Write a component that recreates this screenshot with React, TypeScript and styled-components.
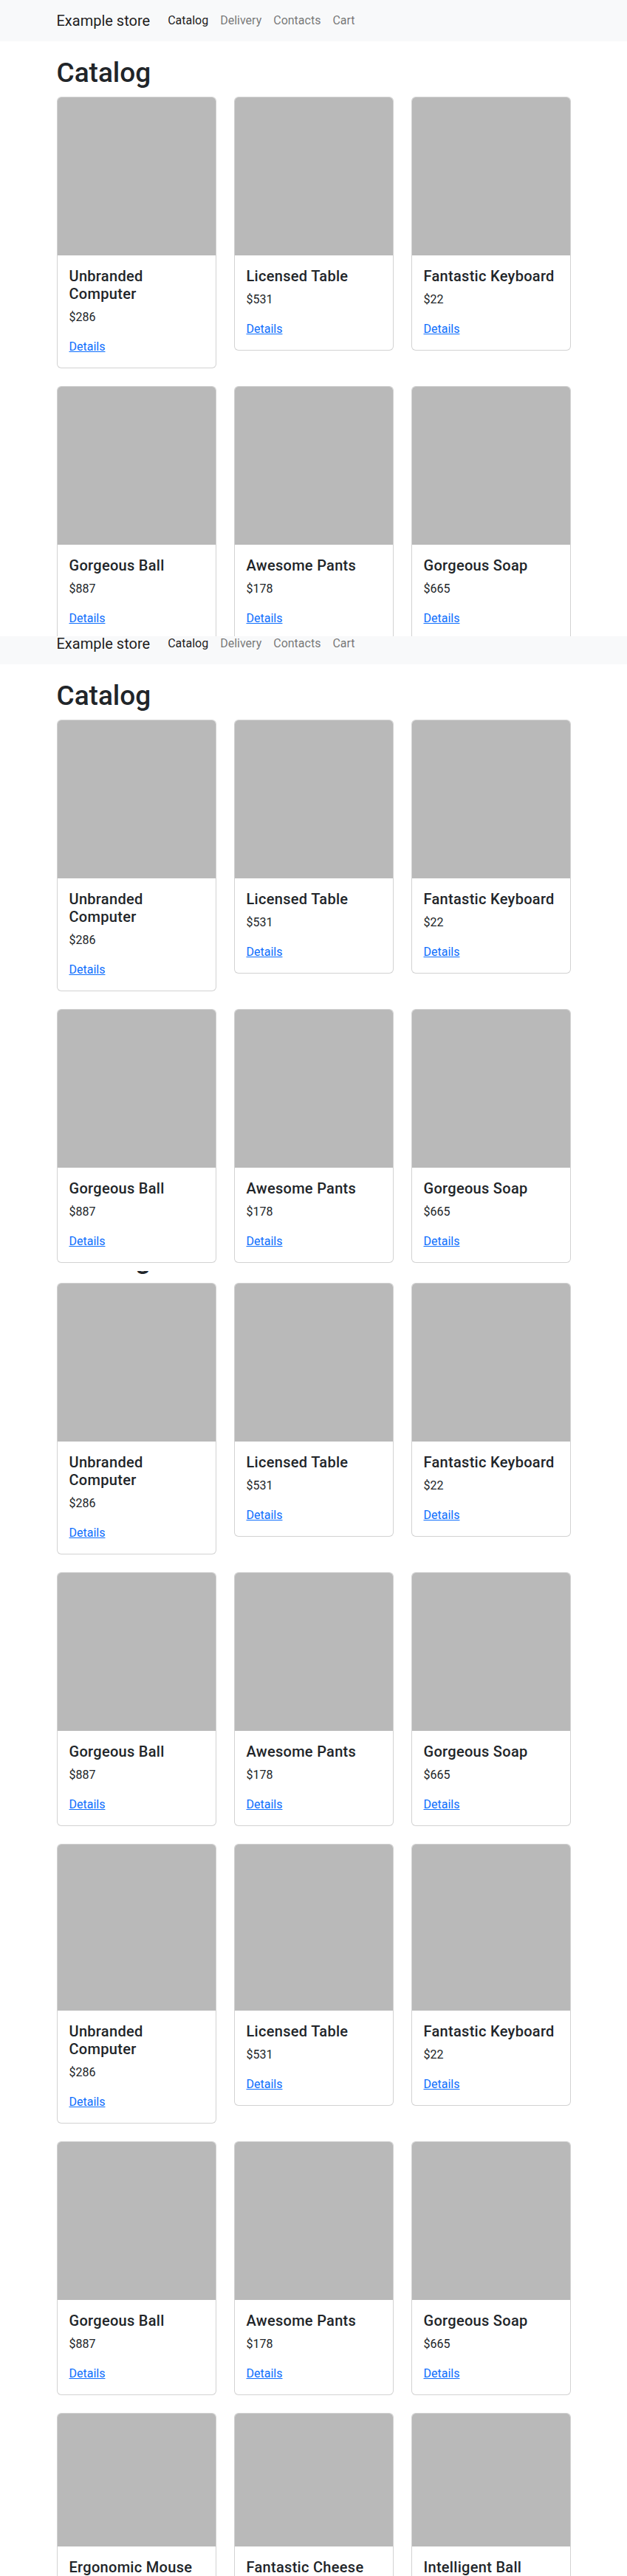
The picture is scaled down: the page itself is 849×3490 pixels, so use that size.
import React from "react";
import styled, { createGlobalStyle } from "styled-components";

const GlobalStyle = createGlobalStyle`
  *, *::before, *::after { box-sizing: border-box; }
  html, body { margin: 0; padding: 0; background: #ffffff; }
  body {
    font-family: Roboto, "Liberation Sans", Arial, sans-serif;
    font-size: 16px;
    line-height: 1.5;
    color: #212529;
    -webkit-font-smoothing: antialiased;
  }
`;

type Product = { name: string; price?: number; img: number };

const baseProducts: { name: string; price?: number }[] = [
  { name: "Unbranded Computer", price: 286 },
  { name: "Licensed Table", price: 531 },
  { name: "Fantastic Keyboard", price: 22 },
  { name: "Gorgeous Ball", price: 887 },
  { name: "Awesome Pants", price: 178 },
  { name: "Gorgeous Soap", price: 665 },
];

const pageProducts: Product[] = baseProducts.map((p) => ({ ...p, img: 214 }));

const longListProducts: Product[] = [
  ...baseProducts.slice(0, 3).map((p) => ({ ...p, img: 225 })),
  ...baseProducts.slice(3, 6).map((p) => ({ ...p, img: 214 })),
  { name: "Ergonomic Mouse", img: 180 },
  { name: "Fantastic Cheese", img: 180 },
  { name: "Intelligent Ball", img: 180 },
];

/* One captured screen slice of the stitched screenshot */
const Shot = styled.section<{ $h: number }>`
  height: ${(p) => p.$h}px;
  overflow: hidden;
`;

/* Content of a slice, scrolled up by $shift pixels */
const Scrolled = styled.div<{ $shift: number }>`
  margin-top: ${(p) => -p.$shift}px;
`;

const NavBar = styled.nav`
  background: #f8f9fa;
  padding: 8px 0;
`;

const NavInner = styled.div`
  width: 720px;
  margin: 0 auto;
  padding: 0 12px;
  display: flex;
  align-items: center;
`;

const Brand = styled.a`
  display: block;
  padding: 5px 0;
  margin-right: 16px;
  font-size: 20px;
  line-height: 30px;
  color: rgba(0, 0, 0, 0.9);
  text-decoration: none;
  white-space: nowrap;
`;

const NavList = styled.ul`
  display: flex;
  list-style: none;
  margin: 0;
  padding: 0;
`;

const NavLink = styled.a<{ $active?: boolean }>`
  display: block;
  padding: 8px;
  font-size: 16px;
  line-height: 24px;
  text-decoration: none;
  color: ${(p) => (p.$active ? "rgba(0, 0, 0, 0.9)" : "rgba(0, 0, 0, 0.55)")};
`;

const Container = styled.main<{ $top: number }>`
  width: 720px;
  margin: 0 auto;
  padding: ${(p) => p.$top}px 12px 0;
`;

const Heading = styled.h1`
  margin: 0 0 8px;
  font-size: 37px;
  line-height: 48px;
  font-weight: 500;
  color: #212529;
`;

const Grid = styled.div`
  display: grid;
  grid-template-columns: repeat(3, 216px);
  column-gap: 24px;
  row-gap: 24px;
  align-items: start;
`;

const Card = styled.article`
  display: flex;
  flex-direction: column;
  background: #ffffff;
  border: 1px solid rgba(0, 0, 0, 0.175);
  border-radius: 6px;
  overflow: hidden;
`;

const CardImage = styled.div<{ $h: number }>`
  height: ${(p) => p.$h}px;
  background: #b9b9b9;
`;

const CardBody = styled.div`
  padding: 16px;
`;

const CardTitle = styled.h5`
  margin: 0 0 8px;
  font-size: 20px;
  line-height: 24px;
  font-weight: 500;
  letter-spacing: 0.3px;
  color: #212529;
`;

const Price = styled.p`
  margin: 0 0 16px;
  font-size: 16px;
  line-height: 24px;
`;

const DetailsLink = styled.a`
  font-size: 16px;
  line-height: 24px;
  color: #0d6efd;
  text-decoration: underline;
`;

const Navigation = () => (
  <NavBar>
    <NavInner>
      <Brand href="#">Example store</Brand>
      <NavList>
        <li><NavLink href="#" $active>Catalog</NavLink></li>
        <li><NavLink href="#">Delivery</NavLink></li>
        <li><NavLink href="#">Contacts</NavLink></li>
        <li><NavLink href="#">Cart</NavLink></li>
      </NavList>
    </NavInner>
  </NavBar>
);

const ProductCard = ({ product }: { product: Product }) => (
  <Card>
    <CardImage $h={product.img} />
    <CardBody>
      <CardTitle>{product.name}</CardTitle>
      {product.price !== undefined && <Price>${product.price}</Price>}
      <DetailsLink href="#">Details</DetailsLink>
    </CardBody>
  </Card>
);

const ProductGrid = ({ items }: { items: Product[] }) => (
  <Grid>
    {items.map((p, i) => (
      <ProductCard key={i} product={p} />
    ))}
  </Grid>
);

const CatalogSection = () => (
  <>
    <Heading>Catalog</Heading>
    <ProductGrid items={pageProducts} />
  </>
);

const StorePage = () => (
  <>
    <Navigation />
    <Container $top={18.7}>
      <CatalogSection />
    </Container>
  </>
);

export default function App() {
  return (
    <>
      <GlobalStyle />
      <Shot $h={862}>
        <StorePage />
      </Shot>
      <Shot $h={860}>
        <Scrolled $shift={18}>
          <StorePage />
        </Scrolled>
      </Shot>
      <Shot $h={763}>
        <Container $top={0}>
          <Scrolled $shift={40.3}>
            <CatalogSection />
          </Scrolled>
        </Container>
      </Shot>
      <Shot $h={1005}>
        <Container $top={12.7}>
          <ProductGrid items={longListProducts} />
        </Container>
      </Shot>
    </>
  );
}
